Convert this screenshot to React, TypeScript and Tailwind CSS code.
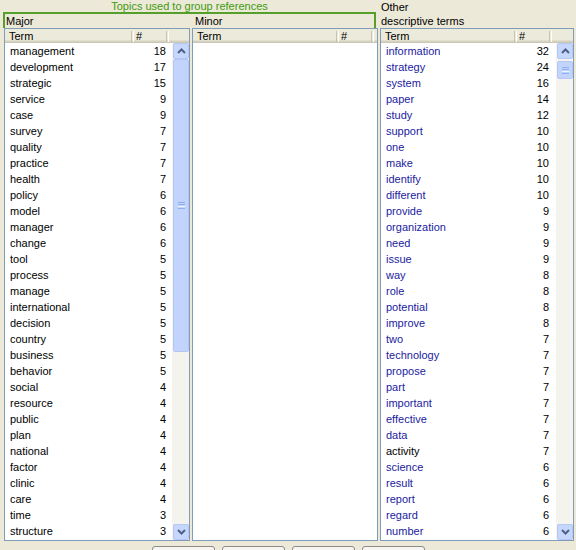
import React from "react";

type Row = { term: string; n: number; black?: boolean };

const major: Row[] = [
  ["management", 18], ["development", 17], ["strategic", 15], ["service", 9], ["case", 9],
  ["survey", 7], ["quality", 7], ["practice", 7], ["health", 7], ["policy", 6],
  ["model", 6], ["manager", 6], ["change", 6], ["tool", 5], ["process", 5],
  ["manage", 5], ["international", 5], ["decision", 5], ["country", 5], ["business", 5],
  ["behavior", 5], ["social", 4], ["resource", 4], ["public", 4], ["plan", 4],
  ["national", 4], ["factor", 4], ["clinic", 4], ["care", 4], ["time", 3], ["structure", 3],
].map(([term, n]) => ({ term: term as string, n: n as number, black: true }));

const other: Row[] = [
  ["information", 32], ["strategy", 24], ["system", 16], ["paper", 14], ["study", 12],
  ["support", 10], ["one", 10], ["make", 10], ["identify", 10], ["different", 10],
  ["provide", 9], ["organization", 9], ["need", 9], ["issue", 9], ["way", 8],
  ["role", 8], ["potential", 8], ["improve", 8], ["two", 7], ["technology", 7],
  ["propose", 7], ["part", 7], ["important", 7], ["effective", 7], ["data", 7],
  ["activity", 7], ["science", 6], ["result", 6], ["report", 6], ["regard", 6], ["number", 6],
].map(([term, n]) => ({ term: term as string, n: n as number, black: term === "activity" }));

function Chevron({ down }: { down?: boolean }) {
  return (
    <svg width="9" height="6" viewBox="0 0 9 6" className={down ? "rotate-180" : ""}>
      <polyline points="1,5 4.5,1.5 8,5" fill="none" stroke="#4d6185" strokeWidth="2" />
    </svg>
  );
}

function ScrollButton({ down }: { down?: boolean }) {
  return (
    <div className="h-[16px] w-[16px] rounded-[2px] border border-[#b3c6f4] bg-[#c6d6fc] flex items-center justify-center">
      <Chevron down={down} />
    </div>
  );
}

function Grip() {
  return (
    <div className="flex flex-col gap-[1px]">
      <div className="h-[1px] w-[7px] bg-[#eef4fe] border-b border-[#8cb0f8]" />
      <div className="h-[1px] w-[7px] bg-[#8cb0f8]" />
      <div className="h-[1px] w-[7px] bg-[#eef4fe]" />
      <div className="h-[1px] w-[7px] bg-[#8cb0f8]" />
    </div>
  );
}

function Scrollbar({ thumbTop, thumbH }: { thumbTop: string; thumbH: string }) {
  return (
    <div className="w-[17px] flex flex-col bg-[#f4f3ee] pl-[1px]">
      <ScrollButton />
      <div className="flex-1 flex flex-col">
        <div className={thumbTop} />
        <div className={`${thumbH} rounded-[2px] border border-[#b3c6f4] bg-[#c3d4fc] flex items-center justify-center`}>
          <Grip />
        </div>
      </div>
      <ScrollButton down />
    </div>
  );
}

function HeaderSep() {
  return <div className="h-[11px] w-[2px] border-l border-[#c7c5b2] shadow-[1px_0_0_#ffffff]" />;
}

function ListBox({
  width, termW, rows, scroll,
}: {
  width: string;
  termW: string;
  rows: Row[];
  scroll?: { top: string; h: string };
}) {
  return (
    <div className={`${width} h-[513px] border border-[#7f9db9] bg-white flex flex-col`}>
      <div className="h-[14px] flex items-center bg-[#ebeadb] shadow-[inset_0_-1px_#cbc7b8,inset_0_-2px_#d6d2c2,inset_0_-3px_#e2decd]">
        <div className={`${termW} pl-[4px] flex items-center justify-between`}>
          <span>Term</span>
          <HeaderSep />
        </div>
        <div className="w-[35px] pl-[3px] flex items-center justify-between">
          <span>#</span>
          <HeaderSep />
        </div>
      </div>
      <div className="flex flex-1 min-h-0">
        <div className="flex-1 flex flex-col">
          {rows.map((r) => (
            <div key={r.term} className="h-[16px] flex items-center">
              <div className={`${termW} pl-[5px] ${r.black ? "text-black" : "text-[#1b1ba0]"}`}>
                {r.term}
              </div>
              <div className="w-[35px] text-right pr-[2px] text-black">{r.n}</div>
            </div>
          ))}
        </div>
        {scroll && <Scrollbar thumbTop={scroll.top} thumbH={scroll.h} />}
      </div>
    </div>
  );
}

export default function App() {
  return (
    <div className="w-[576px] h-[550px] overflow-hidden bg-[#ece9d8] font-['Liberation_Sans',Arial,sans-serif] text-[11px] text-black leading-none">
      <div className="flex h-[28px]">
        <div className="ml-[3px] w-[373px] flex flex-col">
          <div className="h-[12px] flex items-center justify-center text-[#3f9a0e]">
            Topics used to group references
          </div>
          <div className="flex-1 flex items-center border-2 border-b-0 border-[#55a02a]">
            <span className="w-[190px] pl-[1px]">Major</span>
            <span>Minor</span>
          </div>
        </div>
        <div className="ml-[5px] flex flex-col">
          <div className="h-[14px] flex items-center">Other</div>
          <div className="h-[14px] flex items-center">descriptive terms</div>
        </div>
      </div>

      <div className="flex pl-[4px] gap-[2px]">
        <ListBox width="w-[186px]" termW="w-[128px]" rows={major} scroll={{ top: "h-0", h: "h-[293px]" }} />
        <ListBox width="w-[186px]" termW="w-[145px]" rows={[]} />
        <ListBox width="w-[194px]" termW="w-[135px]" rows={other} scroll={{ top: "h-[2px]", h: "h-[18px]" }} />
      </div>

      <div className="flex mt-[5px] ml-[152px] gap-[7px]">
        {["", "", "", ""].map((_, i) => (
          <div key={i} className="w-[63px] h-[23px] rounded-[3px] border border-[#8b8b8b] bg-[#f6f5f0]" />
        ))}
      </div>
    </div>
  );
}
